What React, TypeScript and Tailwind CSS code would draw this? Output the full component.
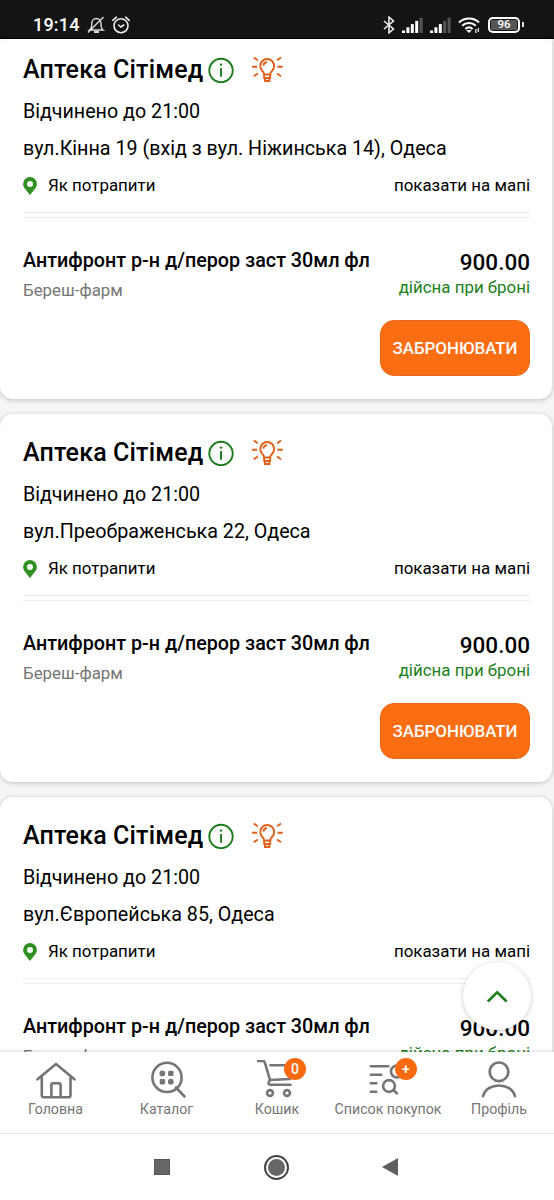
import type { ReactNode } from "react";

interface Pharmacy {
  name: string;
  hours: string;
  address: string;
}

const pharmacies: Pharmacy[] = [
  { name: "Аптека Сітімед", hours: "Відчинено до 21:00", address: "вул.Кінна 19 (вхід з вул. Ніжинська 14), Одеса" },
  { name: "Аптека Сітімед", hours: "Відчинено до 21:00", address: "вул.Преображенська 22, Одеса" },
  { name: "Аптека Сітімед", hours: "Відчинено до 21:00", address: "вул.Європейська 85, Одеса" },
];

function StatusBar() {
  return (
    <header className="relative z-10 flex h-[39px] shrink-0 items-center border-b border-black bg-[#141414] pt-[11px] pl-[33px] pr-[30px] text-white">
      <span className="w-[46px] text-[18px] leading-6 font-medium tracking-[0.2px] whitespace-nowrap">19:14</span>
      <svg className="ml-[8px] h-[18px] w-[18px]" viewBox="0 0 18 18" fill="none" stroke="#ddd" strokeWidth="1.4">
        <path d="M2.500 14h13.500c-1.800-1.300-2-3-2-6.500C14 4.500 12 2.500 9.400 2.500S4.800 4.500 4.800 7.500C4.800 11 4.500 12.500 2.500 14ZM1 16.500 16.500 1" />
        <path d="M7 16h5" strokeWidth="2" />
      </svg>
      <svg className="ml-[7px] h-[18px] w-[18px]" viewBox="0 0 18 18" fill="none" stroke="#eee" strokeWidth="1.6" strokeLinecap="round">
        <circle cx="9" cy="9.700" r="7" />
        <path d="m6.500 9 2.500 2 2.700-2M.8 4.300 4.300 1.200M17.200 4.300 13.700 1.200" />
      </svg>

      <svg className="ml-auto h-[18px] w-[12px]" viewBox="0 0 12 18" fill="none" stroke="#eee" strokeWidth="1.6">
        <path d="m1 5 9.500 8L6 16.800V1.200L10.500 5 1 13" />
      </svg>
      <Signal active={4} />
      <Signal active={3} />
      <svg className="ml-[7px] h-[18px] w-[22px]" viewBox="0 0 22 18" fill="none" stroke="#fff" strokeWidth="2.100">
        <path d="M1 6.500c5.500-5.300 14.500-5.300 20 0M4.200 9.800c4-3.700 9.600-3.700 13.600 0M7.400 13c2.300-2 4.900-2 7.200 0" />
        <path d="m9 14.500 2 2 2-2Z" fill="#fff" strokeWidth="1" />
        <path d="M17.800 13v4M20.300 12v4" strokeWidth="1.200" />
      </svg>
      <div className="ml-[8px] flex h-[16px] w-[32px] items-center justify-center rounded-[5px] border-2 border-white p-px">
        <span className="flex h-[10px] w-full items-center justify-center bg-[#555] text-[11.5px] leading-none font-medium">96</span>
      </div>
      <span className="ml-[2px] h-[5px] w-[2px] bg-[#ddd]" />
    </header>
  );
}

function Signal({ active }: { active: number }) {
  return (
    <svg className="ml-[7px] h-[16px] w-[21px]" viewBox="0 0 21 16">
      {[0, 1, 2, 3, 4].map((i) => (
        <rect key={i} x={i * 4.4} y={13.5 - i * 3.2} width="3" height={2.5 + i * 3.2} fill={i < active ? "#fff" : "#555"} />
      ))}
    </svg>
  );
}

function InfoIcon() {
  return (
    <svg className="ml-[4.5px] h-[26px] w-[26px] shrink-0" viewBox="0 0 26 26" fill="none" stroke="#1c7c1c">
      <circle cx="13" cy="13.500" r="11.700" strokeWidth="1.900" />
      <path d="M13 11v8.800" strokeWidth="1.900" />
      <circle cx="13" cy="7.600" r="1.200" fill="#1c7c1c" stroke="none" />
    </svg>
  );
}

function BulbIcon() {
  return (
    <svg className="mb-[2px] ml-[18px] h-[27px] w-[32px] shrink-0" viewBox="0 0 32 27" fill="none" stroke="#e0601a" strokeWidth="1.900">
      <path d="M12.200 18.500c0-2-.8-2.600-2-3.700A7 7 0 0 1 8.300 9.900a6.900 6.900 0 0 1 13.800 0 7 7 0 0 1-1.900 4.900c-1.200 1.100-2 1.700-2 3.700Z" />
      <path d="M12.200 18v4h6v-4M13 22.300v2.700h4.400v-2.700M11.500 9.800c0-2.100 1.400-3.600 3.500-3.600" />
      <path d="M0 10.800h5.200M25.400 10.800h5.400M1.800 1.500l4 2.700M29 1.500l-4 2.700M1.800 20.200l4-2.700M29 20.200l-4-2.700" />
    </svg>
  );
}

function PharmacyCard({ name, hours, address }: Pharmacy) {
  return (
    <article className="h-[368px] w-[552px] shrink-0 rounded-[13px] bg-white px-[23px] pt-[19px] shadow-[0_1px_5px_rgba(0,0,0,0.22)]">
      <div className="flex h-10 items-center">
        <h2 className="w-[180px] text-[25px] font-medium tracking-[0.15px] whitespace-nowrap">{name}</h2>
        <InfoIcon />
        <BulbIcon />
      </div>
      <div className="mt-[3px] text-[19.7px] leading-[37px] whitespace-nowrap">
        <p>{hours}</p>
        <p>{address}</p>
      </div>
      <div className="flex h-[37px] w-[507px] items-center text-[16.9px]">
        <svg className="h-[18px] w-[14px]" viewBox="0 0 14 18">
          <path d="M7 0a6.900 6.900 0 0 0-6.900 6.900C.1 11 4.500 14 7 18c2.500-4 6.900-7 6.900-11.100A6.900 6.900 0 0 0 7 0Zm0 4a3 3 0 1 1 0 6 3 3 0 0 1 0-6Z" fill="#2f8f20" />
        </svg>
        <span className="ml-[11px]">Як потрапити</span>
        <span className="ml-auto">показати на мапі</span>
      </div>
      <div className="mt-2 h-[6px] w-[507px] border-y border-[#ededed]" />
      <div className="mt-[27px] flex w-[507px] justify-between whitespace-nowrap">
        <div className="mt-px text-[19.75px] leading-[30px] font-medium">
          <h3>Антифронт р-н д/перор заст 30мл фл</h3>
          <p className="-mt-[2px] text-[16.9px] leading-8 font-normal text-[#757575]">Береш-фарм</p>
        </div>
        <div className="flex flex-col items-end">
          <strong className="mt-px text-[22.5px] leading-[32px] font-medium">900.00</strong>
          <span className="-mt-px text-[16.9px] leading-5 text-[#208020]">дійсна при броні</span>
          <button className="mt-[23px] h-14 w-[150px] rounded-[14px] border border-[#e96814] bg-[#fb6d12] pt-px text-[16.9px] font-medium text-white">
            ЗАБРОНЮВАТИ
          </button>
        </div>
      </div>
    </article>
  );
}

function NavItem({ label, badge, width, children }: { label: string; badge?: string; width: string; children: ReactNode }) {
  return (
    <a className={`relative flex shrink-0 flex-col items-center pt-[8px] ${width}`}>
      <svg className="h-[40px] w-[40px]" viewBox="0 0 40 40" fill="none" stroke="#757575" strokeWidth="2.600" strokeLinecap="round" strokeLinejoin="round">
        {children}
      </svg>
      {badge && (
        <b className="absolute top-[6px] left-1/2 ml-[7px] flex h-[22px] w-[22px] items-center justify-center rounded-full bg-[#f96a10] text-[14px] font-medium text-white">
          {badge}
        </b>
      )}
      <span className="text-[14.2px] leading-[18px] whitespace-nowrap">{label}</span>
    </a>
  );
}

function BottomNav() {
  return (
    <nav className="relative z-10 flex h-[82px] shrink-0 border-b border-[#e5e5e5] bg-white text-[#757575] shadow-[0_-1px_3px_rgba(0,0,0,0.15)]">
      <NavItem label="Головна" width="w-[111px]">
        <path d="M1.500 19.300 20 4l18.500 15.300M5.800 17.500v17.800q0 2 2 2h24.700q2 0 2-2V17.500M15.400 37V24.800q0-1.500 1.500-1.500h6.200q1.500 0 1.500 1.500V37" />
      </NavItem>
      <NavItem label="Каталог" width="w-[111px]">
        <circle cx="20" cy="17.400" r="14.600" />
        <path d="m29 27.500 8.500 9" />
        <circle cx="15.300" cy="13.400" r="1.600" fill="#757575" />
        <rect x="22.400" y="12" width="2.800" height="2.800" fill="#757575" />
        <rect x="14" y="20.300" width="2.800" height="2.800" fill="#757575" />
        <circle cx="23.800" cy="21.700" r="1.600" fill="#757575" />
      </NavItem>
      <NavItem label="Кошик" badge="0" width="w-[110px]">
        <path d="M1 1h5q1.500 0 2 2l5 17 20-1M13.500 5.300h21M13 20q-3 4 0 4.800h20.500" />
        <circle cx="13" cy="33" r="2.900" />
        <circle cx="30" cy="33" r="2.900" />
      </NavItem>
      <NavItem label="Список покупок" badge="+" width="w-[112px]">
        <path d="M2.800 6.300h17.500M2.800 14.700h10.500M2.800 23.300h5.500M2.800 31.700h5.500" />
        <circle cx="29" cy="11.500" r="6" />
        <circle cx="21" cy="26" r="5.900" />
        <path d="m25.300 30 3.500 3.300" />
      </NavItem>
      <NavItem label="Профіль" width="w-[110px]">
        <circle cx="20" cy="11.800" r="9.300" />
        <path d="M4 36.300c3.500-14.500 28.500-14.500 32 0" />
      </NavItem>
    </nav>
  );
}

export default function App() {
  return (
    <div className="relative flex h-[1200px] w-[554px] flex-col overflow-hidden bg-white font-[Roboto,sans-serif] text-black">
      <StatusBar />
      <main className="min-h-0 flex-1 overflow-hidden bg-[#f5f5f5]">
        <div className="-mt-2 flex flex-col gap-[15px]">
          {pharmacies.map((p) => (
            <PharmacyCard key={p.address} {...p} />
          ))}
        </div>
      </main>
      <button className="absolute top-[962px] left-[463px] flex h-[68px] w-[68px] items-center justify-center rounded-full bg-white shadow-[0_1px_5px_rgba(0,0,0,0.22)]">
        <svg className="h-[14px] w-[22px]" viewBox="0 0 22 14" fill="none" stroke="#208020" strokeWidth="2.700">
          <path d="m1.800 12.500 9.400-9.200 9.400 9.200" />
        </svg>
      </button>
      <BottomNav />
      <footer className="flex h-[66px] shrink-0 items-center bg-white pl-[154px]">
        <span className="h-4 w-4 border border-[#555] bg-[#666]" />
        <span className="ml-[94px] flex h-[25px] w-[25px] items-center justify-center rounded-full border-2 border-[#444]">
          <span className="h-[17px] w-[17px] rounded-full bg-[#666]" />
        </span>
        <svg className="ml-[93px] h-[18px] w-[16px]" viewBox="0 0 16 18">
          <path d="M0 9 16 0v18Z" fill="#5f5f5f" />
        </svg>
      </footer>
    </div>
  );
}
